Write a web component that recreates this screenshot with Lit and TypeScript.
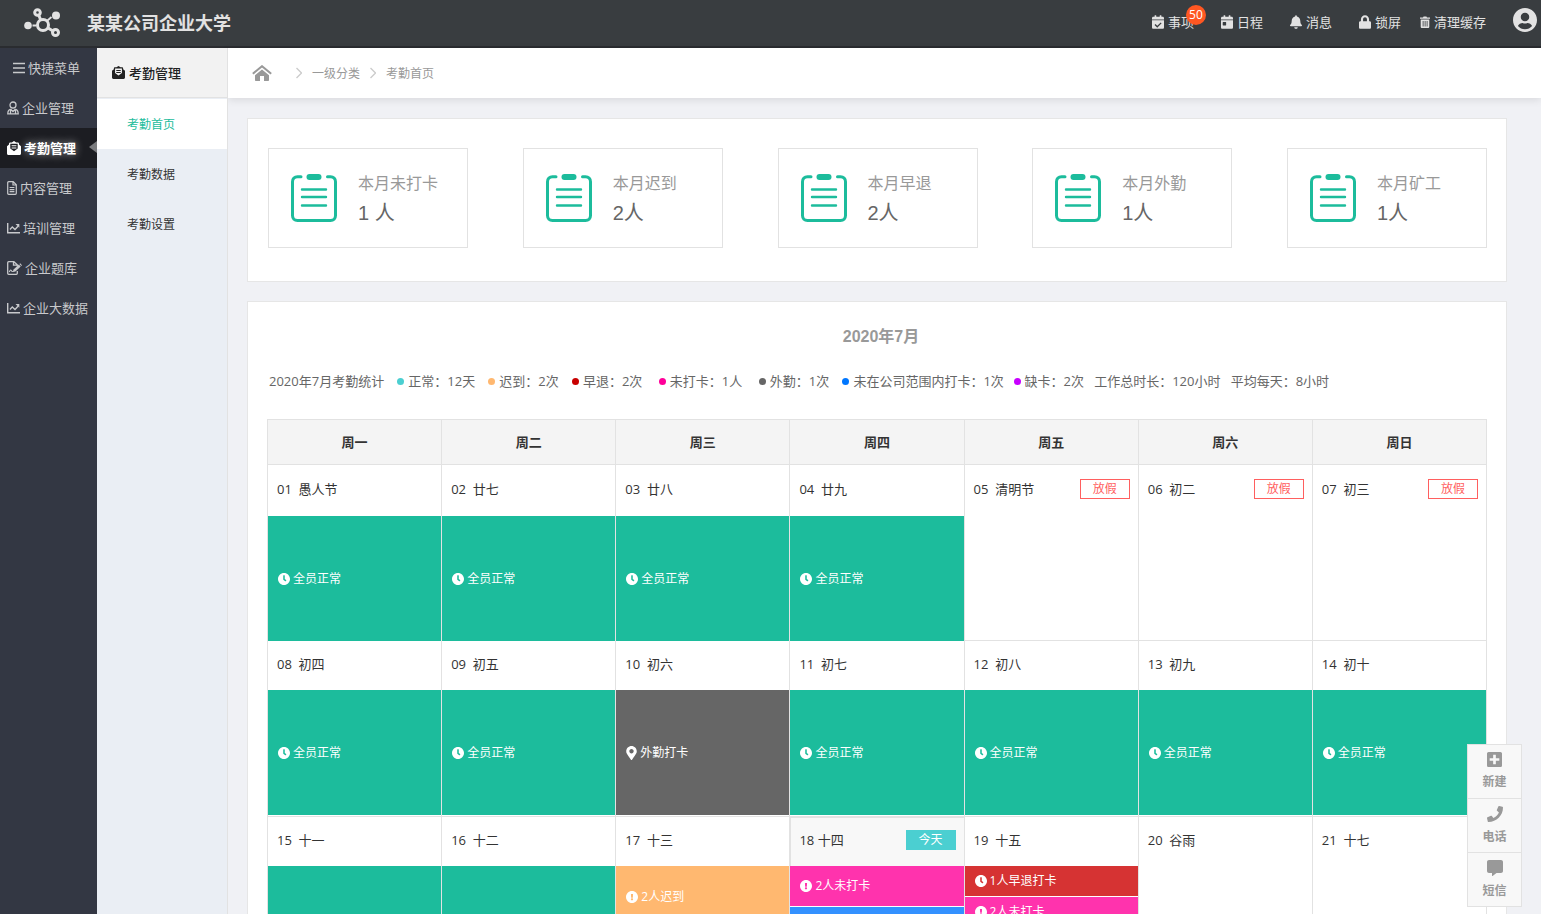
import { LitElement, html, svg, css, nothing, TemplateResult } from "lit";
import { customElement, property, state } from "lit/decorators.js";
import { classMap } from "lit/directives/class-map.js";

type Glyph = { box: string; body: TemplateResult };

const CAL_TOP =
  "M400 64h-48V16c0-8.8-7.2-16-16-16h-32c-8.8 0-16 7.2-16 16v48H160V16c0-8.8-7.2-16-16-16h-32c-8.8 0-16 7.2-16 16v48H48C21.5 64 0 85.5 0 112v48h448v-48c0-26.5-21.5-48-48-48z";

const glyphs: Record<string, Glyph> = {
  logo: {
    box: "0 0 38 30",
    body: svg`<g fill="none" stroke="currentColor" stroke-width="3">
        <circle cx="19" cy="17" r="5.500"/><circle cx="13.500" cy="4.500" r="2.800"/><circle cx="31.500" cy="24.500" r="3"/>
        <path d="M14.800 7.500l2 4.500M24 20l5 3" /><path d="M23.500 12.500l4-3.500M8.500 17.500h4" stroke-width="1.800"/></g>
        <circle cx="4" cy="17.500" r="3.800" fill="currentColor"/><circle cx="32" cy="7.500" r="4" fill="currentColor"/>`,
  },
  bars: {
    box: "0 0 12 12",
    body: svg`<path d="M0 1.500h12M0 6h12M0 10.500h12" stroke="currentColor" stroke-width="1.500"/>`,
  },
  user: {
    box: "0 0 12 14",
    body: svg`<g fill="none" stroke="currentColor" stroke-width="1.300"><circle cx="6" cy="4" r="3"/>
        <path d="M3.700 8.200C1.700 8.700.8 10 .8 12.900h10.400c0-2.900-.9-4.200-2.900-4.700M3.500 8.500v4M8.500 8.500v4M3.700 8.200L6 10.500l2.300-2.300"/></g>`,
  },
  mail: {
    box: "0 0 14 14",
    body: svg`<path d="M0 5.200L2 3.600V2.800C2 2 2.500 1.400 3.300 1.400h1.500L7 0l2.200 1.400h1.500c.8 0 1.300.6 1.300 1.400v.8l2 1.600v7.300c0 .9-.6 1.500-1.500 1.500h-11C.6 14 0 13.400 0 12.500zM3.300 2.800v4.800L7 10.200l3.700-2.600V2.800zM4.600 4.200h4.800v1.100H4.600zm0 2.200h4.800v1.100H4.600z" fill="currentColor" fill-rule="evenodd"/>`,
  },
  file: {
    box: "0 0 10 14",
    body: svg`<path d="M.7 1.700c0-.6.400-1 1-1H6.200l3.100 3.100v8.500c0 .6-.4 1-1 1H1.700c-.6 0-1-.4-1-1zM6 .8V4h3.200M2.600 6.500h4.800M2.600 8.600h4.800M2.600 10.700h4.800" fill="none" stroke="currentColor" stroke-width="1.200"/>`,
  },
  chart: {
    box: "0 0 13 12",
    body: svg`<path d="M.7 1v9.800H13M3 7.500l2.300-2.600L8 7.500l3-3.300" fill="none" stroke="currentColor" stroke-width="1.400"/><path d="M8.500 2H12.300v3.800z" fill="currentColor"/>`,
  },
  sign: {
    box: "0 0 15 14",
    body: svg`<path d="M10.300 10v2.300c0 .6-.4 1-1 1H1.700c-.6 0-1-.4-1-1V1.700c0-.6.4-1 1-1h5.200l3.400 3.100v1.400M6.500.8v3.400h3.700" fill="none" stroke="currentColor" stroke-width="1.300"/><path d="M2.300 11c1-2.500 1.800-2.500 2.500-.8l1.500.3" fill="none" stroke="currentColor" stroke-width="1.100"/><path d="M6 10.900l.3-2.200L11.800 3.500l1.900 1.900-5.300 5.200zM12.400 3l.8-.7 1.800 1.900-.7.700z" fill="currentColor"/>`,
  },
  calCheck: {
    box: "0 0 448 512",
    body: svg`<path fill="currentColor" fill-rule="evenodd" d="${CAL_TOP}M0 192h448v272c0 26.500-21.500 48-48 48H48c-26.500 0-48-21.500-48-48zM325 270l-129 128-67-67-34 34 101 101 163-162z"/>`,
  },
  calDay: {
    box: "0 0 448 512",
    body: svg`<path fill="currentColor" d="${CAL_TOP}M0 464c0 26.500 21.500 48 48 48h352c26.500 0 48-21.500 48-48V192H0v272zm64-192c0-8.800 7.200-16 16-16h96c8.800 0 16 7.200 16 16v96c0 8.800-7.200 16-16 16H80c-8.800 0-16-7.200-16-16v-96z"/>`,
  },
  bell: {
    box: "0 0 448 512",
    body: svg`<path fill="currentColor" d="M224 512c35.320 0 63.970-28.650 63.970-64H160.030c0 35.350 28.650 64 63.970 64zm215.390-149.710c-19.320-20.760-55.470-51.990-55.470-154.290 0-77.700-54.480-139.900-127.940-155.160V32c0-17.670-14.320-32-31.980-32s-31.980 14.330-31.980 32v20.840C118.560 68.100 64.080 130.300 64.080 208c0 102.300-36.150 133.530-55.470 154.290-6 6.450-8.660 14.160-8.610 21.710.11 16.400 12.980 32 32.100 32h383.800c19.120 0 32-15.600 32.100-32 .05-7.550-2.610-15.270-8.610-21.710z"/>`,
  },
  lock: {
    box: "0 0 448 512",
    body: svg`<path fill="currentColor" d="M400 224h-24v-72C376 68.200 307.800 0 224 0S72 68.200 72 152v72H48c-26.500 0-48 21.500-48 48v192c0 26.500 21.500 48 48 48h352c26.500 0 48-21.500 48-48V272c0-26.500-21.500-48-48-48zm-104 0H152v-72c0-39.700 32.300-72 72-72s72 32.300 72 72v72z"/>`,
  },
  trash: {
    box: "0 0 10 12",
    body: svg`<path fill="currentColor" fill-rule="evenodd" d="M0 1.500h3L3.600.5h2.800l.6 1h3v1.300H0zM.7 3.500h8.600v7.200c0 .7-.5 1.300-1.200 1.300H1.900C1.200 12 .7 11.400.7 10.700zM2.700 5v5.500h.8V5zm2 0v5.500h.8V5zm2 0v5.500h.8V5z"/>`,
  },
  avatar: {
    box: "0 8 496 496",
    body: svg`<path fill="currentColor" d="M248 8C111 8 0 119 0 256s111 248 248 248 248-111 248-248S385 8 248 8zm0 96c48.600 0 88 39.400 88 88s-39.400 88-88 88-88-39.400-88-88 39.400-88 88-88zm0 344c-58.700 0-111.300-26.600-146.500-68.200 18.800-35.400 55.600-59.800 98.500-59.800 2.400 0 4.800.4 7.100 1.100 13 4.200 26.600 6.900 40.900 6.900 14.300 0 28-2.700 40.900-6.900 2.300-.7 4.700-1.100 7.100-1.100 42.900 0 79.700 24.400 98.500 59.800C359.300 421.400 306.700 448 248 448z"/>`,
  },
  home: {
    box: "0 0 20 16",
    body: svg`<path d="M.8 8.800L10 1.200l9.200 7.600" fill="none" stroke="currentColor" stroke-width="2"/><path d="M10 4.500l7 5.800V15c0 .6-.4 1-1 1h-4v-5H8v5H4c-.6 0-1-.4-1-1v-4.700z" fill="currentColor"/>`,
  },
  chevron: {
    box: "0 0 6 12",
    body: svg`<path d="M.5 1l5 5-5 5" fill="none" stroke="currentColor" stroke-width="1.400"/>`,
  },
  clipboard: {
    box: "0 0 46 48",
    body: svg`<g fill="none" stroke="currentColor" stroke-width="3" stroke-linecap="round">
        <path d="M10 2.800H6.500c-3 0-5 2-5 5V41.500c0 3 2 5 5 5h33c3 0 5-2 5-5V7.800c0-3-2-5-5-5H36.500"/>
        </g><path d="M11 15.500h24M11 23h24M11 31.500h24" fill="none" stroke="currentColor" stroke-width="2.400" stroke-linecap="round"/>
        <rect x="15.500" y="0" width="15" height="6" rx="3" fill="currentColor"/>`,
  },
  clock: {
    box: "8 8 496 496",
    body: svg`<path fill="currentColor" d="M256,8C119,8,8,119,8,256S119,504,256,504,504,393,504,256,393,8,256,8Zm92.490,313h0l-20,25a16,16,0,0,1-22.490,2.500h0l-67-49.720a40,40,0,0,1-15-31.230V112a16,16,0,0,1,16-16h32a16,16,0,0,1,16,16V256l58,42.500A16,16,0,0,1,348.490,321Z"/>`,
  },
  alert: {
    box: "8 8 496 496",
    body: svg`<path fill="currentColor" d="M504 256c0 136.997-111.043 248-248 248S8 392.997 8 256C8 119.083 119.043 8 256 8s248 111.083 248 248zm-248 50c-25.405 0-46 20.595-46 46s20.595 46 46 46 46-20.595 46-46-20.595-46-46-46zm-43.673-165.346l7.418 136c.347 6.364 5.609 11.346 11.982 11.346h48.546c6.373 0 11.635-4.982 11.982-11.346l7.418-136c.375-6.874-5.098-12.654-11.982-12.654h-63.383c-6.884 0-12.356 5.780-11.981 12.654z"/>`,
  },
  pin: {
    box: "0 0 384 512",
    body: svg`<path fill="currentColor" d="M172.268 501.670C26.970 291.031 0 269.413 0 192 0 85.961 85.961 0 192 0s192 85.961 192 192c0 77.413-26.970 99.031-172.268 309.670-9.535 13.774-29.930 13.773-39.464 0zM192 272c44.183 0 80-35.817 80-80s-35.817-80-80-80-80 35.817-80 80 35.817 80 80 80z"/>`,
  },
  plus: {
    box: "0 32 448 448",
    body: svg`<path fill="currentColor" d="M400 32H48C21.500 32 0 53.500 0 80v352c0 26.500 21.500 48 48 48h352c26.500 0 48-21.500 48-48V80c0-26.500-21.500-48-48-48zm-32 252c0 6.600-5.400 12-12 12h-92v92c0 6.600-5.400 12-12 12h-56c-6.600 0-12-5.400-12-12v-92H92c-6.600 0-12-5.400-12-12v-56c0-6.600 5.400-12 12-12h92v-92c0-6.600 5.400-12 12-12h56c6.600 0 12 5.400 12 12v92h92c6.600 0 12 5.400 12 12v56z"/>`,
  },
  phone: {
    box: "0 0 512 512",
    body: svg`<path fill="currentColor" d="M493.400 24.600l-104-24c-11.300-2.600-22.900 3.300-27.500 13.900l-48 112c-4.200 9.800-1.400 21.300 6.900 28l60.600 49.600c-36 76.700-98.900 140.500-177.200 177.200l-49.600-60.600c-6.800-8.300-18.200-11.100-28-6.900l-112 48C3.900 366.500-2 378.100.6 389.400l24 104C27.100 504.200 36.700 512 48 512c256.100 0 464-207.500 464-464 0-11.200-7.700-20.900-18.600-23.400z"/>`,
  },
  comment: {
    box: "0 0 512 512",
    body: svg`<path fill="currentColor" d="M448 0H64C28.700 0 0 28.700 0 64v288c0 35.300 28.700 64 64 64h96v84c0 9.800 11.200 15.500 19.100 9.700L304 416h144c35.300 0 64-28.700 64-64V64c0-35.300-28.700-64-64-64z"/>`,
  },
};

const icon = (name: string, width: number, height: number) => html`<svg
  width=${width}
  height=${height}
  viewBox=${glyphs[name].box}
  aria-hidden="true"
>${glyphs[name].body}</svg>`;

const base = css`
  * {
    box-sizing: border-box;
  }
  svg {
    display: block;
    flex: none;
  }
  a {
    color: inherit;
    text-decoration: none;
  }
  button {
    margin: 0;
    padding: 0;
    border: 0;
    background: none;
    color: inherit;
    font: inherit;
    cursor: pointer;
  }
`;

type Block = { icon: string; text: string; tone: string; size: string };
type Day = { no: string; name: string; badge?: string; today?: boolean; blocks?: Block[] };

const full: Block[] = [{ icon: "clock", text: "全员正常", tone: "green", size: "fill" }];
const outside: Block[] = [{ icon: "pin", text: "外勤打卡", tone: "gray", size: "fill" }];

const weeks: Day[][] = [
  [
    { no: "01", name: "愚人节", blocks: full },
    { no: "02", name: "廿七", blocks: full },
    { no: "03", name: "廿八", blocks: full },
    { no: "04", name: "廿九", blocks: full },
    { no: "05", name: "清明节", badge: "放假" },
    { no: "06", name: "初二", badge: "放假" },
    { no: "07", name: "初三", badge: "放假" },
  ],
  [
    { no: "08", name: "初四", blocks: full },
    { no: "09", name: "初五", blocks: full },
    { no: "10", name: "初六", blocks: outside },
    { no: "11", name: "初七", blocks: full },
    { no: "12", name: "初八", blocks: full },
    { no: "13", name: "初九", blocks: full },
    { no: "14", name: "初十", blocks: full },
  ],
  [
    { no: "15", name: "十一", blocks: full },
    { no: "16", name: "十二", blocks: full },
    {
      no: "17",
      name: "十三",
      blocks: [
        { icon: "alert", text: "2人迟到", tone: "orange", size: "half" },
        { icon: "", text: "", tone: "green", size: "fill" },
      ],
    },
    {
      no: "18",
      name: "十四",
      badge: "今天",
      today: true,
      blocks: [
        { icon: "alert", text: "2人未打卡", tone: "pink", size: "third" },
        { icon: "", text: "", tone: "blue", size: "fill" },
      ],
    },
    {
      no: "19",
      name: "十五",
      blocks: [
        { icon: "clock", text: "1人早退打卡", tone: "red", size: "quarter" },
        { icon: "alert", text: "2人未打卡", tone: "pink", size: "quarter" },
      ],
    },
    { no: "20", name: "谷雨" },
    { no: "21", name: "十七" },
  ],
];

@customElement("attendance-calendar")
export class AttendanceCalendar extends LitElement {
  static styles = [
    base,
    css`
      :host {
        display: block;
      }
      .grid {
        width: 100%;
        table-layout: fixed;
        border-collapse: collapse;
        color: #333;
        font-size: 13px;
      }
      th,
      td {
        padding: 0;
        border: 1px solid #e2e2e2;
      }
      th {
        height: 45px;
        background: #f4f4f4;
        font-weight: bold;
      }
      td {
        height: 176px;
        vertical-align: top;
      }
      .today {
        background: #f8f8f8;
        box-shadow: inset 1px 1px 0 #e2e2e2;
      }
      .date {
        display: flex;
        align-items: center;
        justify-content: space-between;
        height: 49px;
        padding: 0 8px 4px 9px;
        white-space: pre;
      }
      .tall .date {
        height: 51px;
      }
      .badge {
        width: 50px;
        border: 1px solid #ff5f5f;
        color: #ff5f5f;
        font-size: 12px;
        line-height: 18px;
        text-align: center;
      }
      .badge.now {
        border-color: #4bcfd1;
        background: #4bcfd1;
        color: #fff;
      }
      .stack {
        display: flex;
        flex-direction: column;
        gap: 1px;
        height: 125px;
        background: #fff;
      }
      .tall .stack {
        margin-bottom: -1px;
      }
      .block {
        display: flex;
        align-items: center;
        gap: 3px;
        padding: 0 10px;
        color: #fff;
        font-size: 12px;
      }
      .fill {
        flex: 1;
      }
      .half {
        height: 62px;
      }
      .third {
        height: 40px;
      }
      .quarter {
        height: 30px;
      }
      .green {
        background: #1cbc9c;
      }
      .gray {
        background: #666;
      }
      .orange {
        background: #ffb870;
      }
      .pink {
        background: #ff33ad;
      }
      .blue {
        background: #3391ff;
      }
      .red {
        background: #d63333;
      }
    `,
  ];

  @property({ attribute: false }) weeks: Day[][] = [];

  private block(b: Block) {
    return html`<div class="block ${b.tone} ${b.size}">
      ${b.icon ? (b.icon === "pin" ? icon("pin", 11, 14) : icon(b.icon, 12, 12)) : nothing}
      <span>${b.text}</span>
    </div>`;
  }

  private day(d: Day) {
    return html`<td class=${classMap({ today: !!d.today })}>
      <div class="date"><span>${d.no + (d.today ? " " : "  ") + d.name}</span>${d.badge
        ? html`<span class=${classMap({ badge: true, now: !!d.today })}>${d.badge}</span>`
        : nothing}</div>
      ${d.blocks ? html`<div class="stack">${d.blocks.map((b) => this.block(b))}</div>` : nothing}
    </td>`;
  }

  render() {
    return html`<table class="grid">
      <thead>
        <tr>
          ${["周一", "周二", "周三", "周四", "周五", "周六", "周日"].map((n) => html`<th scope="col">${n}</th>`)}
        </tr>
      </thead>
      <tbody>
        ${this.weeks.map((w, i) => html`<tr class=${classMap({ tall: i === 0 })}>${w.map((d) => this.day(d))}</tr>`)}
      </tbody>
    </table>`;
  }
}

@customElement("stat-card")
export class StatCard extends LitElement {
  static styles = [
    base,
    css`
      :host {
        display: flex;
        align-items: center;
        gap: 21px;
        box-sizing: border-box;
        width: 200px;
        height: 100px;
        padding: 0 22px;
        border: 1px solid #e2e2e2;
        color: #1cbc9c;
      }
      .label {
        color: #999;
        font-size: 16px;
        line-height: 30px;
      }
      .value {
        color: #666;
        font-size: 20px;
        line-height: 30px;
        font-family: "Liberation Sans", "Noto Sans CJK SC", sans-serif;
      }
    `,
  ];

  @property() label = "";
  @property() value = "";

  render() {
    return html`${icon("clipboard", 46, 48)}
      <div>
        <div class="label">${this.label}</div>
        <div class="value">${this.value}</div>
      </div>`;
  }
}

const menu = [
  { icon: "bars", w: 12, h: 12, text: "快捷菜单" },
  { icon: "user", w: 12, h: 14, text: "企业管理" },
  { icon: "mail", w: 14, h: 14, text: "考勤管理" },
  { icon: "file", w: 10, h: 14, text: "内容管理" },
  { icon: "chart", w: 13, h: 12, text: "培训管理" },
  { icon: "sign", w: 15, h: 14, text: "企业题库" },
  { icon: "chart", w: 13, h: 12, text: "企业大数据" },
];

const legend = [
  { tone: "cyan", text: "正常：12天", lead: 3 },
  { tone: "orange", text: "迟到：2次", lead: 3 },
  { tone: "red", text: "早退：2次", lead: 3 },
  { tone: "pink", text: "未打卡：1人", lead: 4 },
  { tone: "gray", text: "外勤：1次", lead: 4 },
  { tone: "blue", text: "未在公司范围内打卡：1次", lead: 3 },
  { tone: "violet", text: "缺卡：2次", lead: 2 },
  { tone: "", text: "工作总时长：120小时", lead: 3 },
  { tone: "", text: "平均每天：8小时", lead: 3 },
];

@customElement("app-root")
export class AppRoot extends LitElement {
  static styles = [
    base,
    css`
      :host {
        display: grid;
        grid-template: 48px minmax(0, 1fr) / 97px 131px minmax(0, 1fr);
        height: 100vh;
        overflow: hidden;
        background: #f0f1f5;
        color: #333;
        font: 13px/20px "Open Sans", "Noto Sans CJK SC", sans-serif;
      }
      .top {
        grid-column: 1 / -1;
        display: flex;
        align-items: center;
        padding: 0 4px 0 24px;
        border-bottom: 2px solid #2a2c30;
        background: #393d40;
        color: #e2e2e2;
      }
      .brand {
        flex: 1;
        margin: 0 0 0 25px;
        font-size: 18px;
        font-weight: bold;
        line-height: 24px;
      }
      .tools {
        display: flex;
        align-items: center;
        gap: 27px;
        padding-bottom: 2px;
      }
      .pair {
        display: flex;
        gap: 19px;
      }
      .tool {
        position: relative;
        display: flex;
        align-items: center;
        gap: 4px;
      }
      .account {
        padding-bottom: 4px;
      }
      .count {
        position: absolute;
        top: -7px;
        right: -12px;
        width: 20px;
        border-radius: 10px;
        background: #ff5722;
        color: #fff;
        font-size: 12px;
        text-align: center;
      }
      .side {
        background: #333743;
        color: #c8c9cc;
      }
      .item {
        display: flex;
        align-items: center;
        gap: 3px;
        height: 40px;
        padding: 0 0 1px 7px;
        white-space: nowrap;
      }
      .item.lead {
        padding-left: 13px;
      }
      .item.on {
        position: relative;
        background: #1c1d22;
        color: #fff;
        font-weight: bold;
        text-shadow: 0 0 8px rgba(255, 255, 255, 0.6);
      }
      .item.on::after {
        content: "";
        position: absolute;
        top: 13px;
        right: 0;
        border: 6px solid transparent;
        border-left-width: 0;
        border-right: 8px solid #7a7b7e;
      }
      .sub {
        position: relative;
        z-index: 1;
        border-right: 1px solid #e2e2e2;
        background: #eaeef4;
      }
      .heading {
        display: flex;
        align-items: center;
        gap: 4px;
        height: 50px;
        margin: 0;
        padding-left: 15px;
        border-bottom: 1px solid #e2e2e2;
        background: #f2f2f2;
        color: #222;
        font-size: 13px;
        font-weight: 500;
      }
      .link {
        display: block;
        padding: 2px 0 0 30px;
        font-size: 12px;
        line-height: 48px;
      }
      .link.on {
        margin-top: 1px;
        background: #fff;
        color: #1cbc9c;
      }
      .main {
        display: flex;
        flex-direction: column;
        min-height: 0;
      }
      .crumbs {
        display: flex;
        flex: none;
        align-items: center;
        gap: 10px;
        height: 50px;
        padding-left: 24px;
        background: #fff;
        box-shadow: 0 2px 8px rgba(0, 0, 0, 0.1);
        color: #999;
        font-size: 12px;
      }
      .crumb {
        padding-top: 2px;
      }
      .home {
        margin-right: 14px;
      }
      .sep {
        color: #ccc;
      }
      .scroll {
        display: flex;
        flex: 1;
        flex-direction: column;
        gap: 19px;
        min-height: 0;
        padding: 20px 34px 20px 19px;
        overflow-y: auto;
        scrollbar-width: none;
      }
      .panel {
        flex: none;
        border: 1px solid #e6e6e6;
        background: #fff;
      }
      .cards {
        display: flex;
        justify-content: space-between;
        padding: 29px 19px 33px 20px;
      }
      .month {
        padding: 23px 19px;
      }
      .title {
        margin: 0;
        padding-left: 8px;
        color: #999;
        font: bold 16px/24px "Liberation Sans", "Noto Sans CJK SC", sans-serif;
        text-align: center;
      }
      .legend {
        margin: 22px 0 28px;
        padding-left: 2px;
        color: #666;
      }
      .dot {
        display: inline-block;
        width: 7px;
        height: 7px;
        margin: 0 4px 1px 3px;
        border-radius: 50%;
      }
      .cyan {
        background: #4bcfd1;
      }
      .orange {
        background: #ffb870;
      }
      .red {
        background: #c80000;
      }
      .pink {
        background: #ff0099;
      }
      .gray {
        background: #666;
      }
      .blue {
        background: #0077ff;
      }
      .violet {
        background: #c800ff;
      }
      .dock {
        position: fixed;
        right: 19px;
        bottom: 7px;
        display: flex;
        flex-direction: column;
        gap: 1px;
        width: 55px;
        border: 1px solid #e2e2e2;
        background: #e2e2e2;
      }
      .action {
        display: flex;
        flex-direction: column;
        align-items: center;
        gap: 5px;
        height: 53px;
        padding-top: 7px;
        background: #f8f8f8;
        color: #999;
        font-size: 12px;
        font-weight: bold;
      }
    `,
  ];

  @state() private section = 2;

  private tool(name: string, w: number, h: number, text: string, count = "") {
    return html`<button class="tool" type="button">
      ${icon(name, w, h)}<span>${text}</span>${count ? html`<span class="count">${count}</span>` : nothing}
    </button>`;
  }

  render() {
    return html`
      <header class="top">
        ${icon("logo", 38, 30)}
        <h1 class="brand">某某公司企业大学</h1>
        <div class="tools">
          ${this.tool("calCheck", 12, 14, "事项", "50")} ${this.tool("calDay", 12, 14, "日程")}
          ${this.tool("bell", 12, 14, "消息")}
          <div class="pair">${this.tool("lock", 12, 14, "锁屏")} ${this.tool("trash", 10, 12, "清理缓存")}</div>
          <button class="tool account" type="button" aria-label="账户">${icon("avatar", 24, 24)}</button>
        </div>
      </header>
      <nav class="side">
        ${menu.map(
          (m, i) => html`<a
            href="#"
            class=${classMap({ item: true, lead: i === 0, on: i === this.section })}
            @click=${(e: Event) => {
              e.preventDefault();
              this.section = i;
            }}
            >${icon(m.icon, m.w, m.h)}<span>${m.text}</span></a
          >`
        )}
      </nav>
      <nav class="sub">
        <h2 class="heading">${icon("mail", 13, 13)}<span>考勤管理</span></h2>
        <a class="link on" href="#">考勤首页</a>
        <a class="link" href="#">考勤数据</a>
        <a class="link" href="#">考勤设置</a>
      </nav>
      <main class="main">
        <div class="crumbs">
          <a class="home" href="#" aria-label="首页">${icon("home", 20, 16)}</a>
          <span class="sep">${icon("chevron", 6, 12)}</span><a class="crumb" href="#">一级分类</a>
          <span class="sep">${icon("chevron", 6, 12)}</span><a class="crumb" href="#">考勤首页</a>
        </div>
        <div class="scroll">
          <section class="panel cards">
            <stat-card label="本月未打卡" value="1 人"></stat-card>
            <stat-card label="本月迟到" value="2人"></stat-card>
            <stat-card label="本月早退" value="2人"></stat-card>
            <stat-card label="本月外勤" value="1人"></stat-card>
            <stat-card label="本月矿工" value="1人"></stat-card>
          </section>
          <section class="panel month">
            <h2 class="title">2020年7月</h2>
            <p class="legend">2020年7月考勤统计${legend.map(
              (l) => html`${"\u00a0".repeat(l.lead)}${l.tone ? html`<i class="dot ${l.tone}"></i>` : nothing}${l.text}`
            )}</p>
            <attendance-calendar .weeks=${weeks}></attendance-calendar>
          </section>
        </div>
      </main>
      <aside class="dock">
        <button class="action" type="button">${icon("plus", 15, 15)}新建</button>
        <button class="action" type="button">${icon("phone", 16, 16)}电话</button>
        <button class="action" type="button">${icon("comment", 16, 16)}短信</button>
      </aside>
    `;
  }
}
